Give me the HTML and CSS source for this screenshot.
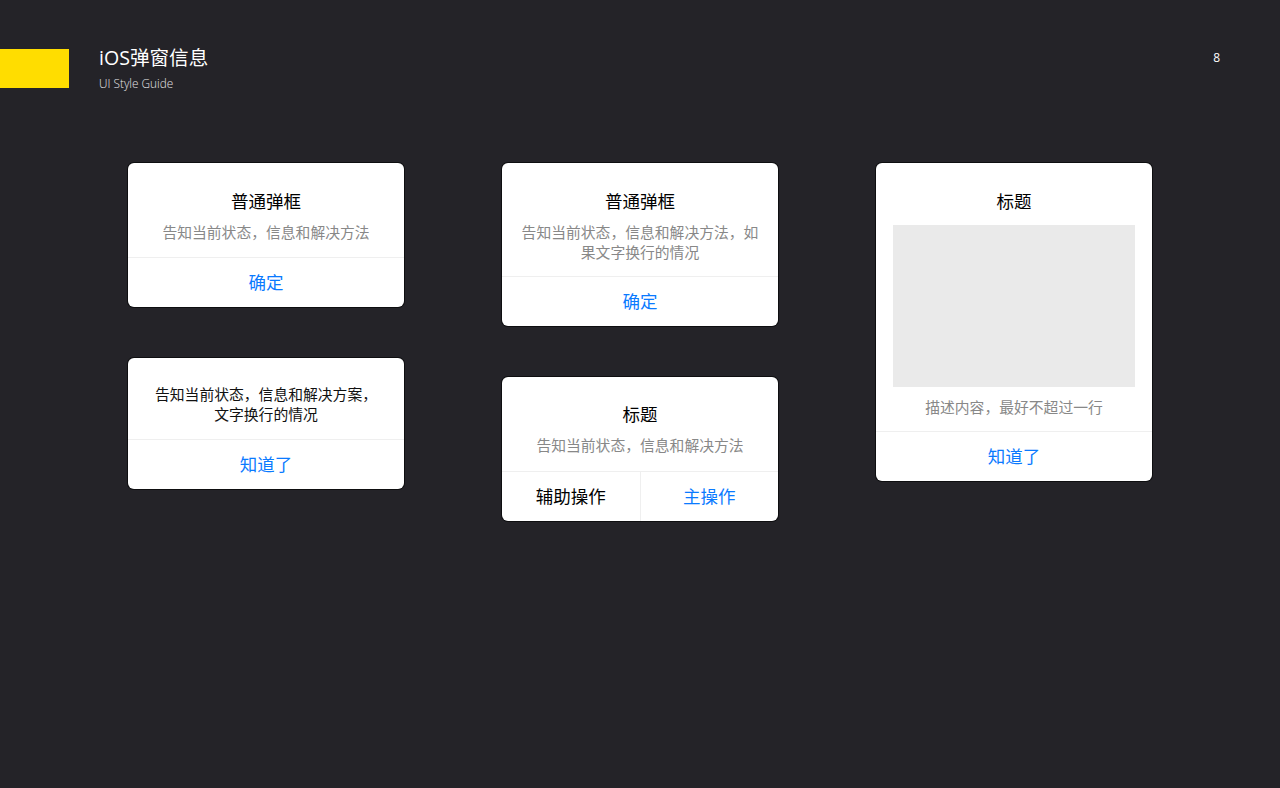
FILE: index.html
```html
<!DOCTYPE html>
<html lang="zh-CN">
<head>
<meta charset="utf-8">
<title>iOS弹窗信息</title>
<link rel="stylesheet" href="styles.css">
</head>
<body>
<header class="header">
  <div class="brand-bar"></div>
  <div class="heading">
    <h1 class="heading-title">iOS弹窗信息</h1>
    <p class="heading-sub">UI Style Guide</p>
  </div>
  <div class="page-num">8</div>
</header>
<main class="board">
  <section class="column">
    <div class="card">
      <div class="card-body">
        <div class="card-title">普通弹框</div>
        <div class="card-desc">告知当前状态，信息和解决方法</div>
      </div>
      <div class="card-actions"><div class="btn">确定</div></div>
    </div>
    <div class="card">
      <div class="card-body card-body-msg">
        <div class="card-msg">告知当前状态，信息和解决方案，<br>文字换行的情况</div>
      </div>
      <div class="card-actions"><div class="btn">知道了</div></div>
    </div>
  </section>
  <section class="column">
    <div class="card">
      <div class="card-body card-body-wrap">
        <div class="card-title">普通弹框</div>
        <div class="card-desc">告知当前状态，信息和解决方法，如<br>果文字换行的情况</div>
      </div>
      <div class="card-actions"><div class="btn">确定</div></div>
    </div>
    <div class="card">
      <div class="card-body card-body-dual">
        <div class="card-title">标题</div>
        <div class="card-desc">告知当前状态，信息和解决方法</div>
      </div>
      <div class="card-actions">
        <div class="btn btn-secondary">辅助操作</div>
        <div class="btn">主操作</div>
      </div>
    </div>
  </section>
  <section class="column">
    <div class="card">
      <div class="card-body card-body-media">
        <div class="card-title">标题</div>
        <div class="media"></div>
        <div class="card-desc">描述内容，最好不超过一行</div>
      </div>
      <div class="card-actions"><div class="btn">知道了</div></div>
    </div>
  </section>
</main>
</body>
</html>
```

FILE: styles.css
```css
html, body {
  margin: 0;
  padding: 0;
}
body {
  background: #242328;
  width: 1280px;
  height: 788px;
  overflow: hidden;
  font-family: "Noto Sans CJK SC", "Noto Sans", sans-serif;
}
.header {
  display: flex;
  align-items: flex-start;
  padding-top: 46px;
}
.brand-bar {
  width: 69px;
  height: 39px;
  margin-top: 3px;
  background: #ffdd00;
}
.heading {
  margin-left: 30px;
  flex: 1;
}
.heading-title {
  margin: 0;
  font-family: "Open Sans", "Noto Sans CJK SC", sans-serif;
  font-weight: 400;
  font-size: 19.6px;
  line-height: 24px;
  color: #ffffff;
}
.heading-sub {
  margin: 5px 0 0;
  font-family: "Open Sans", sans-serif;
  font-weight: 300;
  font-size: 11.8px;
  line-height: 16px;
  color: #e4e4e6;
}
.page-num {
  margin: 4px 60px 0 0;
  font-family: "Open Sans", sans-serif;
  font-size: 12px;
  line-height: 16px;
  color: #ffffff;
}
.board {
  display: flex;
  gap: 98px;
  margin-top: 72px;
  padding-left: 128px;
}
.column {
  width: 276px;
  display: flex;
  flex-direction: column;
  gap: 51px;
}
.card {
  background: #ffffff;
  border-radius: 6px;
  overflow: hidden;
  box-shadow: 0 0 0 1px #0e0e10;
}
.card-body {
  padding: 27px 16px 15px;
  text-align: center;
}
.card-body-msg {
  padding-top: 26px;
}
.card-body-wrap {
  padding-bottom: 14px;
}
.card-body-dual {
  padding-top: 26px;
  padding-bottom: 16px;
}
.card-body-media {
  padding: 27px 17px 14px;
}
.card-title {
  font-size: 17.5px;
  line-height: 22px;
  color: #000000;
}
.card-desc {
  margin-top: 10px;
  font-size: 14.8px;
  line-height: 20px;
  color: #888888;
}
.card-msg {
  font-size: 14.8px;
  line-height: 20px;
  color: #111111;
}
.media {
  margin-top: 13px;
  height: 162px;
  background: #eaeaea;
}
.card-actions {
  display: flex;
  border-top: 1px solid #efefef;
}
.btn {
  flex: 1;
  height: 49px;
  line-height: 47px;
  padding-bottom: 2px;
  box-sizing: border-box;
  text-align: center;
  font-size: 17.5px;
  color: #0a7aff;
}
.btn + .btn {
  border-left: 1px solid #efefef;
}
.btn-secondary {
  color: #000000;
}
```
